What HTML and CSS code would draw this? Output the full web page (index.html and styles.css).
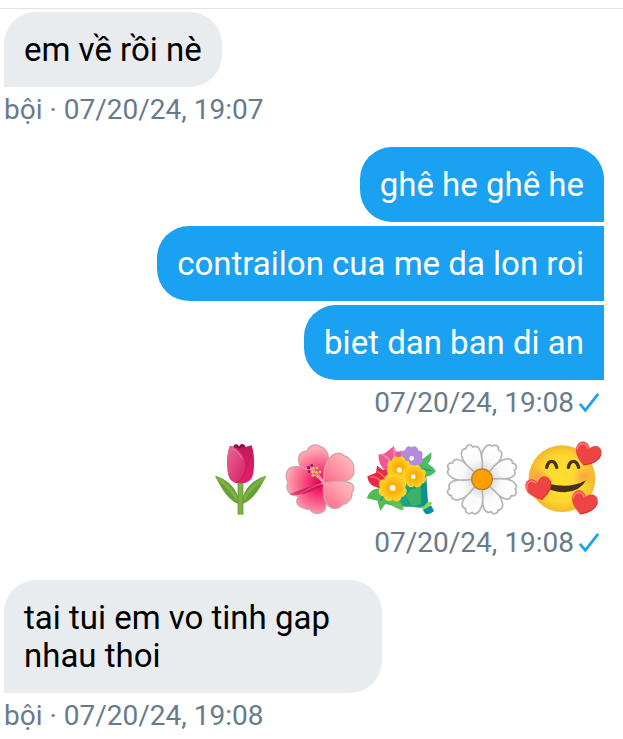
FILE: index.html
```html
<!DOCTYPE html>
<html lang="vi">
<head>
  <meta charset="UTF-8">
  <meta name="viewport" content="width=device-width, initial-scale=1.0">
  <title>Messages</title>
  <link rel="stylesheet" href="styles.css">
</head>
<body>
  <main class="chat">
    <section class="group received">
      <p class="bubble">em về rồi nè</p>
      <div class="meta">bội · <time>07/20/24, 19:07</time></div>
    </section>

    <section class="group sent">
      <p class="bubble">ghê he ghê he</p>
      <p class="bubble">contrailon cua me da lon roi</p>
      <p class="bubble">biet dan ban di an</p>
      <div class="meta">
        <time>07/20/24, 19:08</time>
        <svg class="check" viewBox="0 0 24 24" role="img" aria-label="Sent"><path d="M2 13 L8 20 L22 2"/></svg>
      </div>
    </section>

    <section class="group sent">
      <div class="emojis">
        <!-- tulip -->
        <svg class="emoji" viewBox="-3 15 240 240" role="img" aria-label="Tulip">
          <defs>
            <linearGradient id="tulip" x1="0" y1="0" x2="0" y2="1">
              <stop offset="0" stop-color="#c2185b"/>
              <stop offset="1" stop-color="#e91e6a"/>
            </linearGradient>
            <linearGradient id="petal" x1="0" y1="0" x2="1" y2="1">
              <stop offset="0" stop-color="#e66a9b"/>
              <stop offset="1" stop-color="#d81b60"/>
            </linearGradient>
          </defs>
          <path d="M30 122 C62 130 91 156 99 184 L99 206 C71 197 47 158 30 122Z" fill="#689f38"/>
          <path d="M184 122 C151 130 122 156 114 184 L114 206 C143 197 167 158 184 122Z" fill="#689f38"/>
          <path d="M38 129 C62 147 85 168 97 195 M176 129 C152 147 128 168 116 195" fill="none" stroke="#7cb342" stroke-width="9"/>
          <path d="M99 140 H114 V239 H99Z" fill="#7cb342"/>
          <path d="M99 140 V239 M114 140 V239" stroke="#558b2f" stroke-width="2"/>
          <path d="M85 34 Q88 26 96 28 L103 34 L108 27 Q119 25 122 35 L114 51 H94Z" fill="#880e4f"/>
          <path d="M75 32 Q88 36 99 40 Q116 39 140 31 C148 56 150 91 144 119 Q137 145 107 145 Q76 145 70 119 C65 89 65 57 75 32Z" fill="url(#tulip)"/>
          <path d="M75 32 C105 42 124 70 121 97 C119 119 108 136 94 144 Q75 139 70 119 C65 89 65 57 75 32Z" fill="url(#petal)"/>
          <path d="M101 42 C121 57 129 84 122 103 C119 121 109 135 94 144" fill="none" stroke="#c2185b" stroke-width="3"/>
          <path d="M80 40 Q100 49 111 71" fill="none" stroke="#f090b7" stroke-width="2"/>
        </svg>
        <!-- hibiscus -->
        <svg class="emoji" viewBox="12 15 240 240" role="img" aria-label="Hibiscus">
          <defs>
            <radialGradient id="hibiscus" gradientUnits="userSpaceOnUse" cx="121" cy="145" r="104">
              <stop offset="0" stop-color="#d9004f"/>
              <stop offset=".3" stop-color="#f52c6d"/>
              <stop offset="1" stop-color="#ffabb5"/>
            </radialGradient>
            <linearGradient id="hibiscus-light" x1="0" y1="1" x2="1" y2="0">
              <stop offset="0" stop-color="#fa6386"/>
              <stop offset=".6" stop-color="#ffa3ad"/>
              <stop offset="1" stop-color="#ffc1c3"/>
            </linearGradient>
          </defs>
          <g stroke="#d6a3a8" stroke-width="4" stroke-linejoin="round">
            <path d="M131 144 C98 141 61 113 56 78 C53 58 66 49 82 47 C88 28 111 25 123 36 C142 43 149 64 145 83 C143 107 137 124 131 144Z" fill="url(#hibiscus)"/>
            <path d="M132 144 C111 179 64 191 34 179 C22 170 18 156 24 142 C13 122 20 98 40 96 C72 86 101 116 132 144Z" fill="url(#hibiscus)"/>
            <path d="M131 144 C139 170 144 206 133 227 C118 241 97 236 90 223 C72 224 51 213 50 199 C51 174 94 157 131 144Z" fill="url(#hibiscus)"/>
            <path d="M131 144 C130 111 137 77 155 63 C169 50 184 54 194 63 C212 69 225 88 220 102 C227 119 211 137 190 140 C169 145 149 145 131 144Z" fill="url(#hibiscus-light)"/>
            <path d="M131 144 C154 142 178 134 199 141 C219 142 227 158 216 171 C218 191 204 205 188 209 C174 225 153 223 144 210 C130 195 129 168 131 144Z" fill="url(#hibiscus-light)"/>
          </g>
          <path d="M28 178 Q82 189 132 144 L75 159Z" fill="#c9004a" opacity=".55"/>
          <path d="M90 99 Q116 117 130 143" fill="none" stroke="#ffa3bd" stroke-width="7" stroke-linecap="round"/>
          <g fill="#8e185e"><circle cx="86" cy="98" r="5"/><circle cx="95" cy="91" r="4"/><circle cx="87" cy="110" r="4"/></g>
          <g fill="#ffc270" stroke="#a83b4e" stroke-width="1"><circle cx="101" cy="100" r="5"/><circle cx="111" cy="99" r="5"/><circle cx="98" cy="111" r="5"/><circle cx="109" cy="112" r="5"/><circle cx="120" cy="111" r="5"/><circle cx="99" cy="121" r="5"/><circle cx="113" cy="124" r="5"/></g>
        </svg>
        <!-- bouquet -->
        <svg class="emoji" viewBox="12 15 240 240" role="img" aria-label="Bouquet">
          <defs>
            <path id="bloom" d="M0 -29 C8 -35 17 -29 18 -20 C29 -21 34 -11 28 -2 C35 6 30 17 20 19 C17 30 6 32 0 25 C-8 32 -18 27 -20 18 C-31 16 -34 5 -28 -2 C-34 -12 -27 -22 -18 -20 C-17 -31 -7 -35 0 -29Z"/>
            <radialGradient id="yellow-bloom">
              <stop offset="0" stop-color="#f69b09"/>
              <stop offset=".45" stop-color="#ffb50c"/>
              <stop offset="1" stop-color="#ffd62c"/>
            </radialGradient>
            <linearGradient id="wrapper">
              <stop offset="0" stop-color="#45bd68"/>
              <stop offset="1" stop-color="#078e91"/>
            </linearGradient>
          </defs>
          <path d="M43 191 Q92 219 150 215 L188 219 L204 203 L198 110 Q169 88 127 127Z" fill="url(#wrapper)"/>
          <path d="M20 190 Q31 158 61 160 Q89 176 83 198 L61 228 L52 197Z" fill="#55b95a"/>
          <path d="M72 184 Q117 178 132 225 Q94 223 72 184Z" fill="#64bf55"/>
          <path d="M174 83 L214 52 Q216 74 204 86 Q219 94 228 108 Q213 128 188 124Z" fill="#4fba65"/>
          <path d="M61 197 Q73 177 84 160 M180 104 Q198 100 214 108 M151 159 Q169 174 184 197" fill="none" stroke="#20996b" stroke-width="4"/>
          <path d="M56 58 Q76 57 80 50 L101 34 L108 50 L126 48 L118 94 L81 112 Q52 90 56 58Z" fill="#ef5795"/>
          <path d="M65 60 Q84 62 96 91 M101 40 Q107 57 99 93" fill="none" stroke="#ff82ad" stroke-width="6"/>
          <path d="M22 124 L48 113 L51 92 L68 104 L82 104 L92 135 L68 160 Q25 158 22 124Z" fill="#e52b46"/>
          <path d="M30 126 Q58 122 71 156 M52 110 Q74 119 81 143" fill="none" stroke="#ff6068" stroke-width="5"/>
          <use href="#bloom" transform="translate(155 68) scale(1.08)" fill="#b38bdc"/>
          <circle cx="155" cy="70" r="7" fill="#fff5ff"/>
          <use href="#bloom" transform="translate(116 100) scale(1.12)" fill="url(#yellow-bloom)"/>
          <use href="#bloom" transform="translate(163 125) scale(1.12)" fill="url(#yellow-bloom)"/>
          <use href="#bloom" transform="translate(98 160) scale(1.35)" fill="url(#yellow-bloom)"/>
          <g fill="#fffde1"><circle cx="118" cy="105" r="8"/><circle cx="160" cy="125" r="7"/><circle cx="98" cy="159" r="9"/></g>
          <path d="M138 182 L153 164 L182 155 L184 207 L157 215Z" fill="#47ba5e" opacity=".75"/>
          <path d="M188 224 L213 211 L222 228 Q209 241 196 236Z" fill="#058eaa"/>
          <path d="M181 214 Q192 219 200 203 Q209 198 217 204 L205 217 L189 224Z" fill="#8dd847"/>
        </svg>
        <!-- daisy -->
        <svg class="emoji" viewBox="12 15 240 240" role="img" aria-label="Daisy">
          <defs>
            <linearGradient id="daisy" x1="0" y1="0" x2="0" y2="1">
              <stop offset="0" stop-color="#fff"/>
              <stop offset=".5" stop-color="#fafafa"/>
              <stop offset="1" stop-color="#cfcfd2"/>
            </linearGradient>
            <path id="daisy-petal" d="M0 -10 C-14 -28 -33 -65 -28 -83 C-27 -98 -17 -105 -9 -100 Q-4 -109 4 -107 Q11 -106 12 -97 C29 -99 30 -80 26 -67 C23 -46 12 -25 0 -10Z" fill="url(#daisy)" stroke="#b5b5b5" stroke-width="5" stroke-linejoin="round"/>
          </defs>
          <g transform="translate(126 133) scale(1.03)">
            <use href="#daisy-petal" transform="rotate(22)"/>
            <use href="#daisy-petal" transform="rotate(67)"/>
            <use href="#daisy-petal" transform="rotate(112)"/>
            <use href="#daisy-petal" transform="rotate(157)"/>
            <use href="#daisy-petal" transform="rotate(202)"/>
            <use href="#daisy-petal" transform="rotate(247)"/>
            <use href="#daisy-petal" transform="rotate(292)"/>
            <use href="#daisy-petal" transform="rotate(337)"/>
            <circle r="30" fill="#ffa000" stroke="#b8812c" stroke-width="4"/>
          </g>
        </svg>
        <!-- smiling face with hearts -->
        <svg class="emoji" viewBox="12 15 240 240" role="img" aria-label="Smiling face with hearts">
          <defs>
            <radialGradient id="face">
              <stop offset="0" stop-color="#ffdf30"/>
              <stop offset=".7" stop-color="#fdd62e"/>
              <stop offset="1" stop-color="#f4b82d"/>
            </radialGradient>
            <radialGradient id="blush">
              <stop offset="0" stop-color="#f48b4c" stop-opacity=".7"/>
              <stop offset="1" stop-color="#f48b4c" stop-opacity="0"/>
            </radialGradient>
            <g id="heart">
              <path d="M0 37 C-19 26 -42 9 -39 -13 C-36 -35 -11 -38 0 -18 C11 -38 36 -35 39 -13 C42 9 18 29 0 37Z" fill="#ef4444"/>
              <path d="M-35 -4 C-36 -27 -15 -31 -6 -17" fill="none" stroke="#ff7771" stroke-width="5" stroke-linecap="round"/>
              <path d="M0 35 C18 26 39 9 38 -12" fill="none" stroke="#d62c35" stroke-width="3"/>
            </g>
          </defs>
          <circle cx="126" cy="131" r="100" fill="url(#face)"/>
          <circle cx="53" cy="124" r="32" fill="url(#blush)"/>
          <circle cx="191" cy="124" r="32" fill="url(#blush)"/>
          <path d="M80 97 Q84 79 95 79 Q106 79 110 97 M145 97 Q149 79 160 79 Q171 79 176 97" fill="none" stroke="#493018" stroke-width="10" stroke-linecap="round"/>
          <path d="M88 147 Q151 162 198 136 Q180 170 134 172 Q108 172 88 163Z" fill="#493018"/>
          <use href="#heart" transform="translate(203 57) rotate(20)"/>
          <use href="#heart" transform="translate(57 159) rotate(-13)"/>
          <use href="#heart" transform="translate(192 203) rotate(18)"/>
        </svg>
      </div>
      <div class="meta">
        <time>07/20/24, 19:08</time>
        <svg class="check" viewBox="0 0 24 24" role="img" aria-label="Sent"><path d="M2 13 L8 20 L22 2"/></svg>
      </div>
    </section>

    <section class="group received">
      <p class="bubble">tai tui em vo tinh gap nhau thoi</p>
      <div class="meta">bội · <time>07/20/24, 19:08</time></div>
    </section>
  </main>
</body>
</html>
```
FILE: styles.css
```css
* {
  margin: 0;
  padding: 0;
  box-sizing: border-box;
}

body {
  padding-top: 8px;
  background-color: #fff;
  font-family: Roboto, "Noto Sans", sans-serif;
}

.chat {
  display: flex;
  flex-direction: column;
  gap: 22px;
  padding: 3px 19px 8px 4px;
  border-top: 1px solid #e1e4e7;
}

.group {
  display: flex;
  flex-direction: column;
  align-items: flex-start;
  gap: 4px;
}

.sent {
  align-items: flex-end;
}

.bubble {
  max-width: 63%;
  padding: 19px 20px 18px;
  border-radius: 32px 32px 32px 0;
  background-color: #e8ecef;
  color: #000;
  font-size: 33px;
  line-height: 38px;
}

.sent .bubble {
  max-width: 80%;
  border-radius: 32px 0 0 32px;
  background-color: #1aa1f2;
  color: #fff;
}

.sent .bubble:first-child {
  border-top-right-radius: 32px;
}

.meta {
  display: flex;
  align-items: center;
  gap: 4px;
  margin-top: 4px;
  color: #687b8a;
  font-size: 28px;
  line-height: 30px;
  white-space: pre;
}

.received .meta {
  gap: 0;
}

.sent .meta {
  padding-right: 4px;
}

.check {
  width: 22px;
  height: 24px;
  fill: none;
  stroke: #1aa1f2;
  stroke-width: 3;
}

.emojis {
  display: flex;
}

.emoji {
  width: 80px;
  height: 80px;
}
```
